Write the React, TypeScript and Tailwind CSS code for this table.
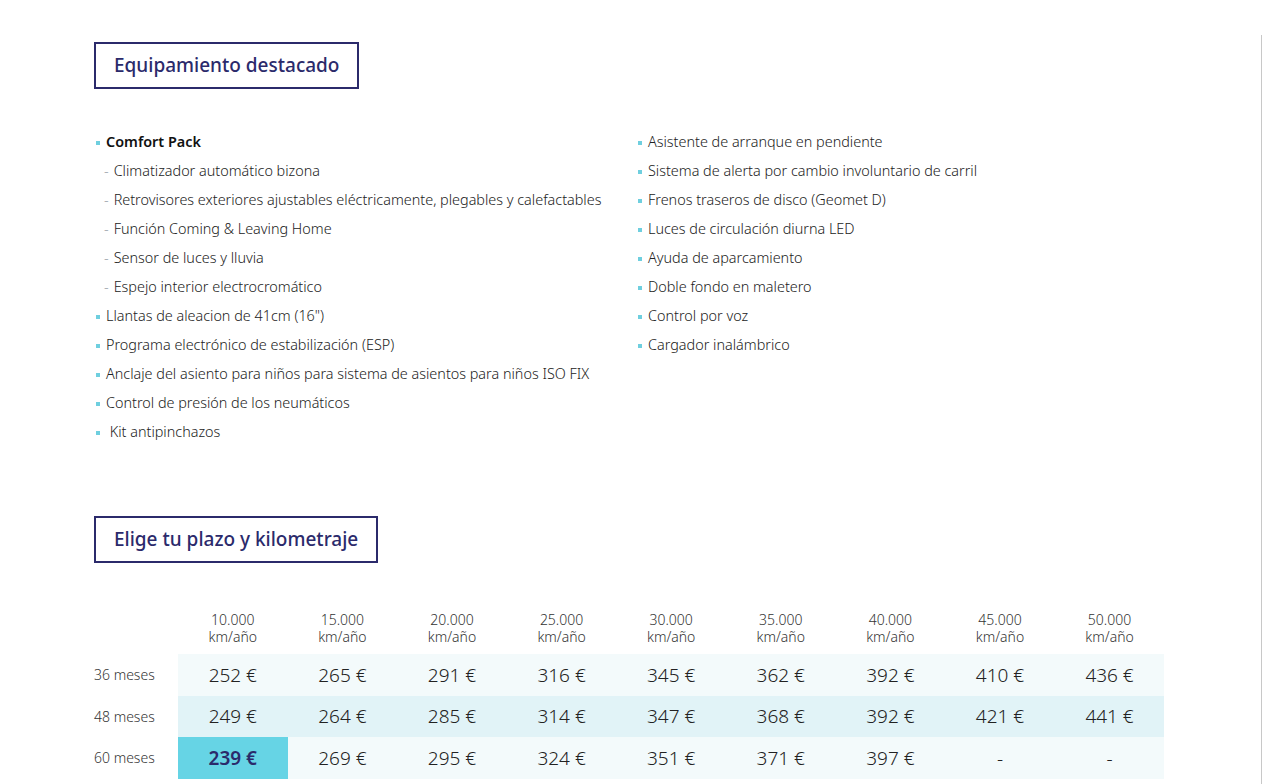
import React from 'react';

const leftItems: { text: string; kind: 'bold' | 'sub' | 'item' }[] = [
  { text: 'Comfort Pack', kind: 'bold' },
  { text: 'Climatizador automático bizona', kind: 'sub' },
  { text: 'Retrovisores exteriores ajustables eléctricamente, plegables y calefactables', kind: 'sub' },
  { text: 'Función Coming & Leaving Home', kind: 'sub' },
  { text: 'Sensor de luces y lluvia', kind: 'sub' },
  { text: 'Espejo interior electrocromático', kind: 'sub' },
  { text: 'Llantas de aleacion de 41cm (16")', kind: 'item' },
  { text: 'Programa electrónico de estabilización (ESP)', kind: 'item' },
  { text: 'Anclaje del asiento para niños para sistema de asientos para niños ISO FIX', kind: 'item' },
  { text: 'Control de presión de los neumáticos', kind: 'item' },
  { text: ' Kit antipinchazos', kind: 'item' },
];

const rightItems = [
  'Asistente de arranque en pendiente',
  'Sistema de alerta por cambio involuntario de carril',
  'Frenos traseros de disco (Geomet D)',
  'Luces de circulación diurna LED',
  'Ayuda de aparcamiento',
  'Doble fondo en maletero',
  'Control por voz',
  'Cargador inalámbrico',
];

const kms = ['10.000', '15.000', '20.000', '25.000', '30.000', '35.000', '40.000', '45.000', '50.000'];

const rows = [
  { label: '36 meses', prices: ['252 €', '265 €', '291 €', '316 €', '345 €', '362 €', '392 €', '410 €', '436 €'], bg: 'bg-[#f3fafb]' },
  { label: '48 meses', prices: ['249 €', '264 €', '285 €', '314 €', '347 €', '368 €', '392 €', '421 €', '441 €'], bg: 'bg-[#e1f3f7]' },
  { label: '60 meses', prices: ['239 €', '269 €', '295 €', '324 €', '351 €', '371 €', '397 €', '-', '-'], bg: 'bg-[#f3fafb]' },
];

const Bullet = () => <span className="inline-block w-[4px] h-[4px] bg-[#6fcfdf] ml-[2px] mr-[6px]" />;

const Item: React.FC<{ children: React.ReactNode; kind: 'bold' | 'sub' | 'item' }> = ({ children, kind }) => (
  <li className="h-[29px] flex items-center whitespace-pre">
    {kind === 'sub' ? (
      <span className="text-[#9aa3ab] ml-[10px] mr-[5px]">-</span>
    ) : (
      <Bullet />
    )}
    <span className={kind === 'bold' ? 'font-semibold text-[#111]' : ''}>{children}</span>
  </li>
);

export default function App() {
  return (
    <div className="relative w-[1262px] h-[784px] bg-white text-[#222] overflow-hidden" style={{ fontFamily: '"Noto Sans", sans-serif' }}>
      <div className="absolute right-0 top-[35px] bottom-0 w-px bg-[#c8c8c8]" />
      <div className="pl-[94px] pt-[42px]">
        <div className="inline-flex items-center h-[47px] px-[18px] border-2 border-[#2b2a6b] text-[#2b2a6b] text-[19px] font-medium">
          Equipamiento destacado
        </div>

        <div className="flex mt-[39px] text-[14.4px] leading-none font-light">
          <ul className="w-[542px]">
            {leftItems.map((it) => (
              <Item key={it.text} kind={it.kind}>{it.text}</Item>
            ))}
          </ul>
          <ul>
            {rightItems.map((t) => (
              <Item key={t} kind="item">{t}</Item>
            ))}
          </ul>
        </div>

        <div className="mt-[69px] inline-flex items-center h-[47px] px-[18px] border-2 border-[#2b2a6b] text-[#2b2a6b] text-[19px] font-medium">
          Elige tu plazo y kilometraje
        </div>

        <div className="mt-[46px] font-light">
          <div className="flex h-[45px] pt-[2px] text-[14px] leading-[17px] text-[#333]">
            <div className="w-[84px]" />
            {kms.map((k) => (
              <div key={k} className="w-[109.6px] flex flex-col items-center">
                <span>{k}</span>
                <span>km/año</span>
              </div>
            ))}
          </div>
          {rows.map((r) => (
            <div key={r.label} className="flex h-[41.5px] items-stretch">
              <div className="w-[84px] flex items-center text-[14px] text-[#333]">{r.label}</div>
              <div className={`flex ${r.bg}`}>
                {r.prices.map((p, i) => {
                  const hi = r.label === '60 meses' && i === 0;
                  return (
                    <div
                      key={i}
                      className={`w-[109.6px] flex items-center justify-center text-[19px] ${hi ? 'bg-[#66d4e5] text-[#2b2a6b] font-semibold' : 'text-[#222]'}`}
                    >
                      {p}
                    </div>
                  );
                })}
              </div>
            </div>
          ))}
        </div>
      </div>
    </div>
  );
}
